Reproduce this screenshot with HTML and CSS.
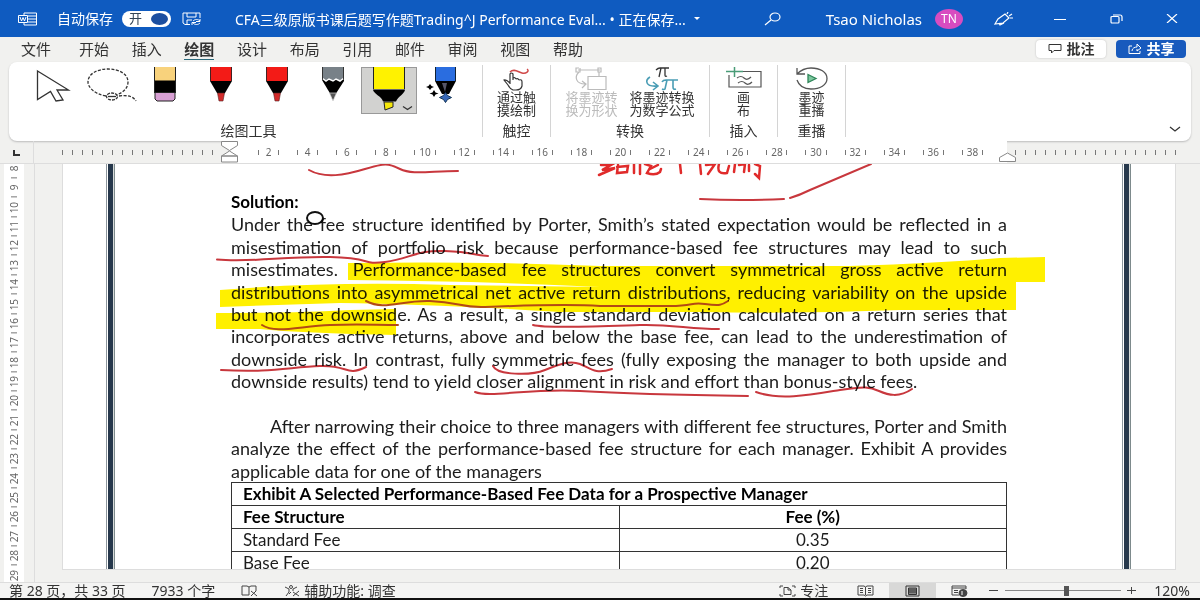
FILE: index.html
```html
<!DOCTYPE html>
<html lang="zh-CN">
<head>
<meta charset="utf-8">
<title>Word</title>
<link rel="stylesheet" href="styles.css">
</head>
<body>
<header class="titlebar">
  <svg class="app-icon" width="20" height="14" viewBox="0 0 20 14" fill="none" stroke="#fff"><path d="M6 3V1h12.500v12H6v-2M10 4h8M10 7h8M10 10h8"/><path d="M.5 3.500h9v7h-9z" fill="#0f5bc0"/><path d="M2 5l1.500 4L5 5.500 6.500 9 8 5"/></svg>
  <label class="autosave">自动保存
    <span class="toggle"><input type="checkbox" checked><span class="toggle-text">开</span></span>
  </label>
  <button class="plain save" aria-label="保存"><svg width="20" height="14" viewBox="0 0 20 14" fill="none" stroke="#fff"><path d="M8 12.500H3L1 11V1h17v5M5 1v4h9V1M5 12V8h5M18 7v2.500h-4M10 13v-2.500h4M11 9c2-2 5-2 7 0M18 11c-2 2-5 2-7 0"/></svg></button>
  <button class="plain doc-title">CFA三级原版书课后题写作题Trading^J Performance Eval... • 正在保存... <svg width="8" height="4" viewBox="0 0 8 4"><path d="M1 0h6L4 3z" fill="#fff"/></svg></button>
  <div class="title-right">
    <button class="plain search" aria-label="搜索"><svg width="18" height="14" viewBox="0 0 18 14" fill="none" stroke="#fff" stroke-width="1.200"><ellipse cx="11" cy="5" rx="5" ry="4"/><path d="M7 8l-6 5"/></svg></button>
    <span class="user">Tsao Nicholas</span>
    <span class="avatar">TN</span>
    <button class="plain win" aria-label="画笔"><svg width="20" height="14" viewBox="0 0 20 14" fill="none" stroke="#fff" stroke-width="1.200"><path d="M1 12l3-5 7-5 4 4-6 5-8 1zM5 11l1 2 4-2M13 2l1-2M15 4l3-2M16 6h3"/></svg></button>
    <button class="plain win" aria-label="最小化"><svg width="12" height="14" viewBox="0 0 12 14" stroke="#fff"><path d="M0 7.500h12"/></svg></button>
    <button class="plain win" aria-label="还原"><svg width="13" height="10" viewBox="0 0 13 10" fill="none" stroke="#fff" stroke-width="1.200"><rect x="1" y="2.500" width="8" height="6.500" rx="1"/><path d="M3 1h7q2 0 2 2v4"/></svg></button>
    <button class="plain win" aria-label="关闭"><svg width="12" height="9" viewBox="0 0 12 9" stroke="#fff" stroke-width="1.200"><path d="M1 0l10 9M11 0L1 9"/></svg></button>
  </div>
</header>

<nav class="tabs">
  <a href="#">文件</a>
  <div class="tab-list">
    <a href="#">开始</a><a href="#">插入</a><a href="#" class="active">绘图</a><a href="#">设计</a><a href="#">布局</a><a href="#">引用</a><a href="#">邮件</a><a href="#">审阅</a><a href="#">视图</a><a href="#">帮助</a>
  </div>
  <div class="tab-actions">
    <button class="comment"><svg width="14" height="10" viewBox="0 0 14 10" fill="none" stroke="#333"><path d="M1 .5h12v6H6L3.500 9V6.500H1z"/></svg>批注</button>
    <button class="share"><svg width="14" height="11" viewBox="0 0 14 11" fill="none" stroke="#fff"><path d="M4 3H1v7.500h11V8M4 8c0-3 3-4 5-4V1l4 4-4 3V6"/></svg>共享</button>
  </div>
</nav>

<section class="ribbon">
  <div class="group tools-group">
    <div class="tools">
      <button aria-label="选择"><svg width="56" height="47" viewBox="0 0 56 47" fill="#fff" stroke="#333" stroke-width="1.300"><path d="M12.500 4l31 19H32l6 10-7 1-5.500-9.500-13 8z"/></svg></button>
      <button aria-label="套索"><svg width="56" height="47" viewBox="0 0 56 47" fill="none" stroke="#333" stroke-width="1.300"><path d="M25 29C13 27 7 20 7 15c0-8 9-13 20-13s20 5 20 13c0 6-5 11-12 13M38 29c8-1 14 0 17 5" stroke-dasharray="3 1.500"/><ellipse cx="31" cy="29.500" rx="5.500" ry="3.500" stroke-dasharray="3 1"/><path d="M27 29.500h8"/></svg></button>
      <button aria-label="橡皮擦"><svg width="56" height="47" viewBox="0 0 56 47"><path d="M17 0h22v14H17z" fill="#f8d27c"/><path d="M17 13.500h22v12H17z"/><path d="M18 25.500h20V32l-2 2H20l-2-2z" fill="#d8a0d4" stroke="#222"/><path d="M17.500 0v26M38.500 0v26" stroke="#222"/></svg></button>
      <button aria-label="红色笔"><svg width="56" height="47" viewBox="0 0 56 47"><path d="M17 0h22v14H17z" fill="#f31b17"/><path d="M17 14h22l-7 12h-8z"/><path d="M24.500 26h7L30 34h-4z" fill="#d32b2b" stroke="#522" stroke-width=".6"/><path d="M17.500 0v14M38.500 0v14" stroke="#422"/></svg></button>
      <button aria-label="红色笔 2"><svg width="56" height="47" viewBox="0 0 56 47"><path d="M17 0h22v14H17z" fill="#f31b17"/><path d="M17 14h22l-7 12h-8z"/><path d="M24.500 26h7L30 34h-4z" fill="#d32b2b" stroke="#522" stroke-width=".6"/><path d="M17.500 0v14M38.500 0v14" stroke="#422"/></svg></button>
      <button aria-label="铅笔"><svg width="56" height="47" viewBox="0 0 56 47"><path d="M17 0h22v14l-9 14h-4L17 13z" fill="#000"/><path d="M17 0h22v11l-4 3-4-2-3 2-4-2-3 2-4-3z" fill="#788188"/><path d="M17 11l4 3 3-2 4 2 3-2 4 2 4-3" fill="none" stroke="#fff" stroke-width="1.500"/><path d="M24.500 26h7L28 34z" fill="#555" stroke="#ddd" stroke-width=".7"/><path d="M17.500 0v12M38.500 0v12" stroke="#333"/></svg></button>
      <button class="selected" aria-label="荧光笔"><svg width="56" height="47" viewBox="0 0 56 47"><path d="M12 0h32v22H12z" fill="#fff200"/><path d="M12.500 0v22M43.500 0v22" stroke="#222"/><path d="M12 22.500h32c0 4-7 7-9 12H22c-1-5-10-8-10-12z"/><path d="M23 35h9v5l-8 3z" fill="#f4e60a" stroke="#222"/><path d="M42 39.500l4.500 3 4.500-3" fill="none" stroke="#333" stroke-width="1.300"/></svg></button>
      <button aria-label="星系笔"><svg width="56" height="47" viewBox="0 0 56 47"><path d="M18 0h21v14H18z" fill="#2a6de0"/><path d="M18 14h21l-7 13h-7z"/><path d="M25 16h5l-2 9z" fill="#556"/><path d="M18.500 0v14M38.500 0v14" stroke="#123"/><path d="M28.500 25.500l2 3 4 2-4 2-2 3-2-3-4-2 4-2z" fill="#3868b8" stroke="#135"/><path d="M13 17l1.500 2 2.500 1-2.500 1-1.500 2-1.500-2L9 20l2.500-1zM17 23l1.500 2.500 3 1-3 1L17 30l-1.500-2.500-3-1 3-1z"/></svg></button>
    </div>
    <span class="group-name">绘图工具</span>
  </div>
  <div class="group small">
    <div class="cmds"><button class="cmd"><svg width="32" height="24" viewBox="0 0 32 24" fill="none"><path d="M10 5c4-4 8 0 12 1s8-2 5-4" stroke="#d04848" stroke-width="1.500"/><path d="M10 17V7q1-2 3 0v6M13 11q2-1 3 1M16 12q2-1 3 1M19 13q3-1 3 2v4q-1 4-6 4h-3q-3-1-5-5l-4-5q2-1 6 3" stroke="#333" stroke-width="1.200"/></svg><span>通过触<br>摸绘制</span></button></div>
    <span class="group-name">触控</span>
  </div>
  <div class="group wide">
    <div class="cmds"><button class="cmd" disabled><svg width="34" height="24" viewBox="0 0 34 24" fill="none" stroke="#bbb" stroke-width="1.200"><path d="M4 3h22M5 1h-3v4h4V1M24 1h3v4h-3zM25 5v4M5 5c-5 5-3 12 6 12M8 14l4 3-4 4"/><path d="M14 9.500h18v13H14z"/></svg><span>将墨迹转<br>换为形状</span></button>
    <button class="cmd"><svg width="36" height="24" viewBox="0 0 36 24" fill="none"><path d="M12 3q2-2 4-2h9M17 1l-2 9M21 1v7q0 2 2 1" stroke="#333" stroke-width="1.300"/><path d="M6 10c-5 3-5 10 7 9M9 15l5 4-5 4M18 15q1-2 4-2h12M23 13l-2 9q-1 1-3 0M29 13v7q0 3 3 2" stroke="#4a9db5" stroke-width="1.600"/></svg><span>将墨迹转换<br>为数学公式</span></button></div>
    <span class="group-name">转换</span>
  </div>
  <div class="group small">
    <div class="cmds"><button class="cmd"><svg width="36" height="24" viewBox="0 0 36 24" fill="none" stroke="#555" stroke-width="1.200"><path d="M17 4.500h18V20H3V8"/><path d="M0 4.500h17M8.500 0v10" stroke="#4a9c77" stroke-width="1.500"/><path d="M11 11q4-3 7 0t7-1M12 16q4-3 7 0t7-1"/></svg><span>画<br>布</span></button></div>
    <span class="group-name">插入</span>
  </div>
  <div class="group small">
    <div class="cmds"><button class="cmd"><svg width="36" height="24" viewBox="0 0 36 24" fill="none" stroke="#555" stroke-width="1.300"><path d="M3 1v6h8M3 7c4-4 9-6 14-6 9 0 16 4 16 10.500S26 22 17 22C10 22 5 19 3 13"/><path d="M14 7.500l8 4-8 4z" fill="#7ec8a0" stroke="#2e8558"/></svg><span>墨迹<br>重播</span></button></div>
    <span class="group-name">重播</span>
  </div>
  <button class="plain collapse" aria-label="折叠功能区"><svg width="12" height="6" viewBox="0 0 12 6" fill="none" stroke="#333" stroke-width="1.300"><path d="M1 1l5 4 5-4"/></svg></button>
</section>

<div class="hruler">
  <div class="corner"><svg width="8" height="6" viewBox="0 0 8 6" fill="none" stroke="#333" stroke-width="2"><path d="M1 0v5h6"/></svg></div>
  <div class="ticks left-ticks"></div>
  <div class="scale">
    <svg class="indent" width="17" height="22" viewBox="0 0 17 22" fill="#fff" stroke="#888"><path d="M.5.500h16v4l-8 5-8-5z"/><path d="M8.500 10l8 5H.5zM.5 15h16v6H.5z"/></svg>
    <div class="numbers"><span>2</span><span>4</span><span>6</span><span>8</span><span>10</span><span>12</span><span>14</span><span>16</span><span>18</span><span>20</span><span>22</span><span>24</span><span>26</span><span>28</span><span>30</span><span>32</span><span>34</span><span>36</span><span>38</span></div>
    <svg class="indent-right" width="17" height="10" viewBox="0 0 17 10" fill="#fff" stroke="#888"><path d="M8.500 1l8 4.500v4H.5v-4z"/></svg>
  </div>
  <div class="ticks right-ticks"></div>
</div>

<main class="workspace">
  <div class="vruler"><div class="vnumbers"><span>8</span><span>9</span><span>10</span><span>11</span><span>12</span><span>13</span><span>14</span><span>15</span><span>16</span><span>17</span><span>18</span><span>19</span><span>20</span><span>21</span><span>22</span><span>23</span><span>24</span><span>25</span><span>26</span><span>27</span><span>28</span><span>29</span></div></div>
  <div class="page">
    <div class="page-border"></div>
    <div class="content">
      <article class="text">
        <h1>Solution:</h1>
        <p>
          <span>Under the fee structure identified by Porter, Smith’s stated expectation would be reflected in a</span>
          <span>misestimation of portfolio risk because performance-based fee structures may lead to such</span>
          <span>misestimates. Performance-based fee structures convert symmetrical gross active return</span>
          <span>distributions into asymmetrical net active return distributions, reducing variability on the upside</span>
          <span>but not the downside. As a result, a single standard deviation calculated on a return series that</span>
          <span>incorporates active returns, above and below the base fee, can lead to the underestimation of</span>
          <span>downside risk. In contrast, fully symmetric fees (fully exposing the manager to both upside and</span>
          <span class="last">downside results) tend to yield closer alignment in risk and effort than bonus-style fees.</span>
        </p>
        <div class="blank"></div>
        <p>
          <span class="indented">After narrowing their choice to three managers with different fee structures, Porter and Smith</span>
          <span>analyze the effect of the performance-based fee structure for each manager. Exhibit A provides</span>
          <span class="last">applicable data for one of the managers</span>
        </p>
      </article>
      <table>
        <thead>
          <tr><th colspan="2">Exhibit A Selected Performance-Based Fee Data for a Prospective Manager</th></tr>
          <tr><th>Fee Structure</th><th>Fee (%)</th></tr>
        </thead>
        <tbody>
          <tr><td>Standard Fee</td><td>0.35</td></tr>
          <tr><td>Base Fee</td><td>0.20</td></tr>
        </tbody>
      </table>
    </div>
    <div class="page-border"></div>
    <svg class="ink" width="1112" height="406" viewBox="63 163 1112 406" fill="none" stroke-linecap="round">
      <g fill="#fff000">
        <path d="M348 262Q480 260 600 265H850Q940 262 1000 257L1045 256V281H1016V309H900Q800 313 700 311H560Q430 303 340 302L220 306V289Q330 280 450 284L600 286Q480 280 348 279z"/>
        <path d="M216 312Q300 312 350 309L396 308V334Q300 332 260 328H216z"/>
      </g>
      <g stroke="#c8373d" stroke-width="2">
        <path d="M309 169C325 178 345 174 365 168S388 162 400 168S430 170 458 170"/>
        <path d="M217 258.500C250 262 285 255 330 256S360 264 385 261S415 249 445 250S470 254 488 255"/>
        <path d="M533 324C548 328 610 325 640 324S690 328 719 328"/>
        <path d="M221 369C270 372 290 366 320 365S345 376 366 366"/>
        <path d="M493 365C497 374 530 375 545 369S570 359 580 363S595 374 612 368"/>
        <path d="M475 391C490 397 530 387 580 390S680 394 748 395"/>
        <path d="M756 391C780 400 815 393 840 389S870 386 879 390S899 397 912 388"/>
        <path d="M700 198Q740 200 784 198M790 197Q800 194 810 189L871 163"/>
      </g>
      <g stroke="#b34a14" stroke-width="2">
        <path d="M366 300C385 310 400 299 430 300S460 307 485 306S570 303 600 305H670C695 305 690 301 705 303S722 304 728 300"/>
        <path d="M262 324C275 333 300 325 330 324S375 324 398 324"/>
      </g>
      <g stroke="#e02b2b" stroke-width="2.500">
        <path d="M601 164L611 164L602 169L615 167L599 174M618 164L617 172L627 171L628 165L617 166M634 163V172M640 163L640 173M645 163L651 165L647 172Q655 175 660 171L661 168M650 168L658 164M680 163L681 172M700 163L701 173M706 164L715 163L708 173M719 163Q716 174 727 172L729 165M735 163L734 171M739 164L745 163L744 171M749 164V170M755 163L760 165L759 177L755 173"/>
      </g>
      <ellipse cx="315" cy="217" rx="8" ry="6" stroke="#111" stroke-width="2"/>
    </svg>
  </div>
</main>

<footer class="status">
  <span>第 28 页，共 33 页</span>
  <span>7933 个字</span>
  <button class="plain" aria-label="校对"><svg width="17" height="12" viewBox="0 0 17 12" fill="none" stroke="#444"><path d="M8 10H1V1h5l2 1 2-1h5v5M8 2v8M10 6l6 5M15 6l-5 5"/></svg></button>
  <button class="plain access"><svg width="16" height="12" viewBox="0 0 16 12" fill="none" stroke="#444"><circle cx="7" cy="2" r="1.500"/><path d="M1 2l4 2v3l-3 4M13 2L9 4v2M5 9l2-2M9 7l6 4M15 6l-6 5"/></svg>辅助功能: 调查</button>
  <div class="view">
    <button class="plain focus"><svg width="17" height="12" viewBox="0 0 17 12" fill="none" stroke="#444"><path d="M1 3V1h3M13 1h3v2M1 9v2h3M13 11h3V9M5 2.500h4l3 2.500v4.500H5zM9 2.500V5h3"/></svg>专注</button>
    <button class="plain mode" aria-label="阅读视图"><svg width="17" height="12" viewBox="0 0 17 12" fill="none" stroke="#444"><path d="M1 1h6l1.500 1L10 1h6v9h-6l-1.500 1L7 10H1zM8.500 2v8M3 3.500h3M3 5.500h3M3 7.500h3M11 3.500h3M11 5.500h3M11 7.500h3"/></svg></button>
    <button class="plain mode on" aria-label="页面视图"><svg width="15" height="12" viewBox="0 0 15 12" fill="none" stroke="#333"><path d="M1 1h13v10H1z"/><path d="M3.500 3h8v6.500h-8z" fill="#888"/><path d="M4 5h7M4 7h7"/></svg></button>
    <button class="plain mode" aria-label="Web 版式"><svg width="17" height="12" viewBox="0 0 17 12" fill="none" stroke="#444"><path d="M8 10H1V1h14v3M1 3h14M3 5.500h4M3 7.500h4"/><ellipse cx="12" cy="8" rx="4" ry="3.500" fill="#444"/><path d="M11 6v4" stroke="#fff"/></svg></button>
    <button class="plain zoom-btn minus" aria-label="缩小"><svg width="9" height="9" viewBox="0 0 9 9" stroke="#444"><path d="M0 4.500h9"/></svg></button>
    <input class="zoom" type="range" min="0" max="100" value="53" aria-label="缩放">
    <button class="plain zoom-btn" aria-label="放大"><svg width="9" height="9" viewBox="0 0 9 9" stroke="#444"><path d="M0 4.500h9M4.500 1v7"/></svg></button>
    <span class="percent">120%</span>
  </div>
</footer>
</body>
</html>
```
FILE: styles.css
```css
* { box-sizing: border-box; }
body {
  margin: 0;
  height: 100vh;
  display: flex;
  flex-direction: column;
  overflow: hidden;
  background: #f1f1ef;
  color: #333;
  font-family: "Noto Sans", "Noto Sans CJK SC", sans-serif;
  font-size: 14px;
}
button { font: inherit; color: inherit; padding: 0; border: 0; background: none; }
a { color: inherit; text-decoration: none; }
svg { display: block; flex: none; }
.plain { display: flex; align-items: center; }

/* Title bar */
.titlebar {
  flex: none;
  display: flex;
  align-items: center;
  height: 37px;
  padding-left: 18px;
  background: #0f5bc0;
  color: #fff;
  font-size: 14px;
}
.autosave { display: flex; align-items: center; gap: 9px; margin-left: 19px; line-height: 18px; }
.toggle { position: relative; display: flex; }
.toggle input { appearance: none; width: 49px; height: 16px; margin: 0; border-radius: 8px; background: #fff; }
.toggle input::after {
  content: "";
  display: block;
  width: 17px;
  height: 12px;
  margin: 2px 3px 0 29px;
  border-radius: 50%;
  background: #1c4fa0;
}
.toggle-text { position: absolute; left: 7px; top: 0; line-height: 15px; font-size: 13px; color: #345; }
.save { margin-left: 11px; }
.doc-title { margin-left: 33px; gap: 4px; white-space: pre; }
.title-right { display: flex; align-items: center; margin-left: auto; }
.user { margin-left: 44px; font-size: 15px; }
.avatar {
  display: flex;
  align-items: center;
  justify-content: center;
  width: 28px;
  height: 20px;
  margin: 0 13px 0 13px;
  border-radius: 50%;
  background: #d84cc0;
  font-size: 12px;
}
.win { width: 56px; height: 37px; justify-content: center; }

/* Tabs */
.tabs { flex: none; display: flex; align-items: center; height: 25px; padding: 0 14px 2px 21px; font-size: 15px; line-height: 20px; }
.tab-list { display: flex; justify-content: space-between; width: 504px; margin-left: 28px; }
.active { font-weight: 700; box-shadow: 0 1px 0 #2b6a7c; }
.tab-actions { display: flex; gap: 10px; margin-left: auto; font-size: 14px; font-weight: 700; }
.tab-actions button { display: flex; align-items: center; justify-content: center; gap: 5px; width: 70px; height: 18px; border-radius: 4px; }
.comment { background: #fff; box-shadow: 0 0 2px #bbb; }
.share { background: #185abd; color: #fff; }

/* Ribbon */
.ribbon {
  flex: none;
  display: flex;
  height: 79px;
  margin: 0 9px;
  padding: 3px 0 4px;
  border-radius: 8px;
  background: #fff;
  box-shadow: 0 1px 2px #bbb;
}
.group { display: flex; flex-direction: column; align-items: center; justify-content: space-between; border-right: 1px solid #d4d4d4; }
.tools-group { width: 474px; padding: 2px 0 0 6px; }
.small { width: 68px; }
.wide { width: 159px; }
.group-name { font-size: 14px; line-height: 13px; }
.tools { display: flex; }
.tools .selected { background: #d2d2d0; box-shadow: inset 0 0 0 1px #999; }
.cmds { display: flex; gap: 12px; padding-top: 2px; }
.cmd { display: flex; flex-direction: column; align-items: center; font-size: 13px; line-height: 13px; white-space: nowrap; }
.cmd:disabled { color: #bbb; }
.collapse { margin: auto 10px 5px auto; }

/* Rulers */
.hruler { flex: none; display: flex; align-items: stretch; height: 23px; border-bottom: 1px solid #ddd; }
.corner { width: 34px; padding: 9px 0 0 13px; border-right: 1px solid #ddd; }
.ticks { height: 5px; margin-top: 9px; background: repeating-linear-gradient(90deg, #777 0 1px, transparent 1px 10px); }
.left-ticks { width: 160px; margin-left: 28px; }
.right-ticks { flex: none; width: 161px; margin: 9px 24px 0 8px; }
.scale { flex: 1; position: relative; display: flex; margin-left: 8px; padding: 0 15px 0 19px; background: #fff; }
.indent { position: absolute; left: -9px; top: 0; }
.indent-right { position: absolute; right: -9px; bottom: 1px; }
.numbers { flex: 1; display: grid; grid-auto-flow: column; grid-auto-columns: 1fr; align-items: center; color: #666; font-size: 10px; line-height: 12px; }
.numbers span {
  margin: 0 9px;
  text-align: center;
  background: linear-gradient(#777, #777) left center / 1px 5px no-repeat, linear-gradient(#777, #777) right center / 1px 5px no-repeat;
}
.workspace { flex: 1; min-height: 0; display: flex; overflow: hidden; }
.vruler { flex: none; width: 35px; padding: 0 10px 0 4px; overflow: hidden; border-right: 1px solid #ddd; }
.vnumbers { display: flex; flex-direction: column; height: calc(100% + 8px); margin-top: -5px; background: #fff; color: #666; font-size: 10px; line-height: 20px; }
.vnumbers span {
  flex: 1;
  writing-mode: vertical-rl;
  transform: rotate(180deg);
  text-align: center;
  background: linear-gradient(#777, #777) center top / 6px 1px no-repeat;
}

/* Document page */
.page { position: relative; flex: 1; display: flex; margin: 0 25px 13px 28px; overflow: hidden; background: #fff; box-shadow: 0 0 0 1px #ddd; }
.page-border { flex: none; width: 10px; margin: 0 43px; background: linear-gradient(90deg, #8b959c 0 1px, #fff 1px 2px, #26384c 2px 7px, #d8dcda 7px 8px, #7d8a8c 8px 9px, #fff 9px); }
.content { flex: 1; min-width: 0; padding: 27px 72px 0; color: #1c1c1c; font-family: Lato, "Noto Sans", sans-serif; }
.text { display: grid; grid-template: repeat(13, 1fr) / minmax(0, 1fr); height: 291px; font-size: 18px; line-height: 22px; }
.text h1 { margin: 0; font-size: 17px; line-height: 22px; color: #000; }
.text p { display: contents; }
.text span { white-space: nowrap; text-align-last: justify; }
.text .last { text-align-last: left; }
.text .indented { padding-left: 39px; }
table { width: 100%; border-collapse: collapse; table-layout: fixed; font-size: 17px; line-height: 22px; }
th, td { height: 23px; padding: 0 11px; border: 1px solid #333; text-align: left; }
th { color: #000; }
tr > :nth-child(2) { text-align: center; }
.ink { position: absolute; left: 0; top: 0; mix-blend-mode: multiply; }

/* Status bar */
.status {
  flex: none;
  display: flex;
  align-items: center;
  height: 18px;
  padding-left: 9px;
  gap: 26px;
  border-top: 1px solid #ddd;
  border-bottom: 2px solid #111;
  background: #f4f4f3;
  font-size: 14px;
  line-height: 15px;
  white-space: nowrap;
}
.access, .focus { gap: 4px; }
.view { display: flex; align-items: center; margin-left: auto; padding-right: 10px; }
.focus { margin-right: 14px; }
.mode { width: 47px; height: 15px; justify-content: center; }
.on { background: #d8d8d7; }
.zoom-btn { margin-left: 6px; }
.minus { margin: 0 7px 0 6px; }
.zoom { appearance: none; width: 116px; height: 12px; margin: 0; background: linear-gradient(#888, #888) center / 100% 1px no-repeat; }
.zoom::-webkit-slider-thumb { appearance: none; width: 5px; height: 10px; background: #555; }
.percent { margin-left: 18px; }
```
